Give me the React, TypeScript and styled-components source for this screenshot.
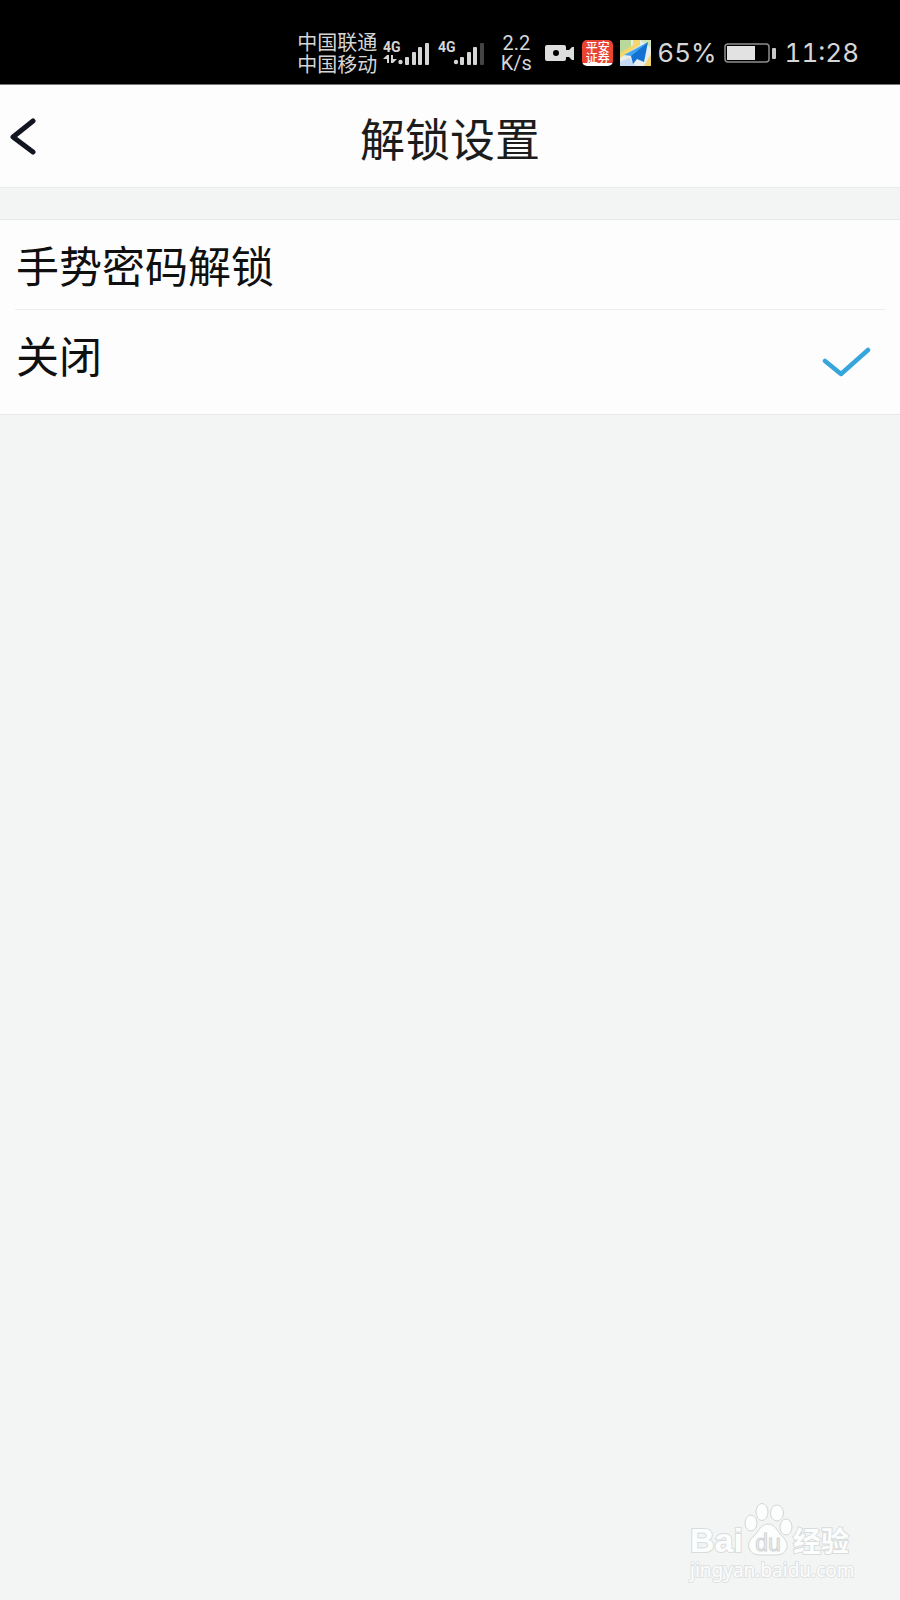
import React, { useState } from "react";
import styled, { createGlobalStyle } from "styled-components";

const GlobalStyle = createGlobalStyle`
  * { box-sizing: border-box; }
  body {
    margin: 0;
    background: #f3f5f5;
    font-family: "Noto Sans CJK SC", sans-serif;
  }
`;

const Screen = styled.div`
  min-height: 100vh;
  display: flex;
  flex-direction: column;
`;

const StatusBar = styled.div`
  height: 85px;
  padding: 21px 41px 0 0;
  display: flex;
  align-items: center;
  justify-content: flex-end;
  background: #000;
  border-bottom: 1px solid #777;
  color: #d6d6d6;
`;

const Carriers = styled.div`
  display: flex;
  flex-direction: column;
  font-size: 20px;
  line-height: 22px;
  margin-right: 6px;
`;

const Signals = styled.svg`
  display: block;
  width: 102px;
  height: 28px;
  margin-right: 14px;
`;

const Speed = styled.div`
  width: 34px;
  margin-right: 12px;
  font-family: Roboto, sans-serif;
  font-size: 20px;
  line-height: 20px;
  text-align: center;
`;

const StatusIcon = styled.svg<{ $width: number; $gap: number }>`
  display: block;
  width: ${(p) => p.$width}px;
  height: 26px;
  margin-right: ${(p) => p.$gap}px;
`;

const AppBadge = styled.span`
  width: 31px;
  height: 26px;
  margin-right: 7px;
  padding: 1px 3px 0;
  border-radius: 5px;
  background: linear-gradient(#e94433 0 23px, #fff 23px);
  color: #fff;
  font-size: 12px;
  font-weight: 500;
  line-height: 11px;
  text-align: center;
`;

const StatusText = styled.span<{ $gap?: number }>`
  margin-right: ${(p) => p.$gap ?? 0}px;
  font-family: Inter, sans-serif;
  font-size: 26px;
  font-variant-numeric: tabular-nums;
  line-height: 30px;
`;

const Header = styled.header`
  height: 103px;
  display: grid;
  grid-template-columns: 60px 1fr 60px;
  align-items: center;
  background: #fdfdfd;
  border-bottom: 1px solid #e9ebeb;
`;

const BackButton = styled.button`
  height: 60px;
  padding: 0 0 0 10px;
  border: 0;
  background: none;
  cursor: pointer;

  svg { display: block; }
`;

const Title = styled.h1`
  margin: 0;
  padding-top: 4px;
  color: #1c1c1c;
  font-size: 45px;
  font-weight: 400;
  line-height: 60px;
  text-align: center;
`;

const Options = styled.fieldset`
  margin: 31px 0 0;
  padding: 0;
  min-width: 0;
  border: solid #e6e8e9;
  border-width: 1px 0;
  background: #fdfdfd;
`;

const Option = styled.label<{ $height: number }>`
  height: ${(p) => p.$height}px;
  padding: 0 29px 0 16px;
  display: flex;
  align-items: center;
  justify-content: space-between;
  color: #101010;
  font-size: 43px;
  line-height: 60px;
  cursor: pointer;
`;

const OptionName = styled.span`
  align-self: flex-start;
  padding-top: 14px;
`;

const Divider = styled.div`
  height: 1px;
  margin: 0 15px;
  background: #ebedee;
`;

const Radio = styled.input`
  appearance: none;
  width: 0;
  height: 0;
  margin: 0;
`;

const RadioSlot = styled.span`
  display: flex;
`;

const Watermark = styled.footer`
  margin: auto 48px 18px auto;
  width: 162px;
  color: #fcfdfd;
`;

const Brand = styled.div`
  display: flex;
  align-items: flex-end;
  -webkit-text-stroke: 2px #d9dcdc;
  paint-order: stroke fill;
`;

const BrandLatin = styled.span`
  font: 700 34px/36px "Liberation Sans", sans-serif;
`;

const BrandChinese = styled.span`
  font-size: 28px;
  font-weight: 700;
  line-height: 36px;
`;

const Paw = styled.svg`
  display: block;
  flex: none;
  width: 50px;
  height: 56px;
  paint-order: normal;
  -webkit-text-stroke: 0;
`;

const Site = styled.div`
  font: 400 19px/24px "Noto Sans", sans-serif;
  -webkit-text-stroke: 2px #dfe2e2;
  paint-order: stroke fill;
`;

const choices = [
  { id: "gesture", name: "手势密码解锁", height: 89 },
  { id: "off", name: "关闭", height: 104 },
];

export default function App() {
  const [selected, setSelected] = useState("off");

  return (
    <Screen>
      <GlobalStyle />
      <StatusBar>
        <Carriers>
          <span>中国联通</span>
          <span>中国移动</span>
        </Carriers>
        <Signals viewBox="0 0 102 28" fill="#d6d6d6" aria-hidden="true">
          <g fontFamily="Roboto, sans-serif" fontSize="14" fontWeight="700">
            <text x="0" y="13">4G</text>
            <text x="55" y="13">4G</text>
          </g>
          <path d="M0 20l4-4h2v8H4v-4zM8 16h2v4h4l-4 4H8z" />
          <circle cx="17.500" cy="23" r="2.200" />
          <rect x="22" y="18" width="4" height="8" rx="1" />
          <rect x="29" y="13" width="4" height="13" rx="1" />
          <rect x="35" y="8" width="4" height="18" rx="1" />
          <rect x="42" y="4" width="4" height="22" rx="1" />
          <circle cx="73" cy="23" r="2.200" />
          <rect x="77" y="18" width="4" height="8" rx="1" />
          <rect x="84" y="13" width="4" height="13" rx="1" />
          <rect x="90" y="8" width="4" height="18" rx="1" />
          <rect x="97" y="4" width="4" height="22" rx="1" fill="#444" />
        </Signals>
        <Speed>2.2 K/s</Speed>
        <StatusIcon $width={30} $gap={7} viewBox="0 0 30 26" aria-hidden="true">
          <path
            fill="#dedede"
            fillRule="evenodd"
            d="M2 5h17q2 0 2 2v3l3 0 3-3h2v13h-2l-3-3h-3v2q0 2-2 2H2q-2 0-2-2V7q0-2 2-2zM11 10a3 3 0 1 0 0 6 3 3 0 0 0 0-6z"
          />
        </StatusIcon>
        <AppBadge>平安证券</AppBadge>
        <StatusIcon $width={31} $gap={6} viewBox="0 0 31 26" aria-hidden="true">
          <rect width="31" height="26" fill="#e9edeb" />
          <path d="M0 0h11v7L0 14z" fill="#b9d89b" />
          <path d="M13 0h7v5L0 18v-5l13-8z" fill="#f4d66b" />
          <path d="M20 0h11v8z" fill="#cfe3b5" />
          <path d="M24 26l7-12v12z" fill="#f3d36c" />
          <path d="M0 22l9-4 7 8H0z" fill="#c6daf2" />
          <path d="M28 2L4 15l8 1z" fill="#3aa5f5" />
          <path d="M28 2L11 16l2 8 4-5 7 3z" fill="#1473d2" />
        </StatusIcon>
        <StatusText $gap={7}>65%</StatusText>
        <StatusIcon $width={52} $gap={9} viewBox="0 0 52 26" aria-hidden="true">
          <rect x="1" y="4" width="44" height="18" rx="3" fill="none" stroke="#8e8e8e" strokeWidth="1.500" />
          <rect x="3" y="6" width="28" height="14" fill="#e2e2e2" />
          <rect x="48" y="8" width="4" height="11" rx="1" fill="#c8c8c8" />
        </StatusIcon>
        <StatusText>11:28</StatusText>
      </StatusBar>

      <Header>
        <BackButton type="button" aria-label="返回">
          <svg width="28" height="40" viewBox="0 0 28 40" fill="none" stroke="#101520" strokeWidth="5" strokeLinecap="round">
            <path d="M23 5L3 21l20 15" strokeLinejoin="round" />
          </svg>
        </BackButton>
        <Title>解锁设置</Title>
      </Header>

      <Options aria-label="解锁设置">
        {choices.map((choice, index) => (
          <React.Fragment key={choice.id}>
            {index > 0 && <Divider />}
            <Option $height={choice.height}>
              <OptionName>{choice.name}</OptionName>
              <RadioSlot>
                <Radio
                  type="radio"
                  name="unlock"
                  checked={selected === choice.id}
                  onChange={() => setSelected(choice.id)}
                />
                {selected === choice.id && (
                  <svg width="49" height="30" viewBox="0 0 49 30" fill="none" aria-hidden="true">
                    <path d="M3 14L19 27 46 3" stroke="#36a5dc" strokeWidth="4.500" strokeLinecap="round" strokeLinejoin="round" />
                  </svg>
                )}
              </RadioSlot>
            </Option>
          </React.Fragment>
        ))}
      </Options>

      <Watermark>
        <Brand>
          <BrandLatin>Bai</BrandLatin>
          <Paw viewBox="0 0 50 56" fill="#fcfdfd" stroke="#d3d6d6" aria-hidden="true">
            <ellipse cx="8" cy="21" rx="6" ry="8" />
            <ellipse cx="19" cy="10" rx="6" ry="8.500" />
            <ellipse cx="34" cy="11" rx="6.500" ry="8" />
            <ellipse cx="43" cy="25" rx="6" ry="8" />
            <path d="M25 22c-7 0-9 7-14 12-5 4-7 9-4 14 3 6 10 5 18 5s15 1 18-5c3-5 0-10-4-14-5-5-7-12-14-12z" />
            <text x="25" y="49" textAnchor="middle" fontFamily="Liberation Sans, sans-serif" fontSize="23" fontWeight="400" fill="#eceeee">du</text>
          </Paw>
          <BrandChinese>经验</BrandChinese>
        </Brand>
        <Site>jingyan.baidu.com</Site>
      </Watermark>
    </Screen>
  );
}
